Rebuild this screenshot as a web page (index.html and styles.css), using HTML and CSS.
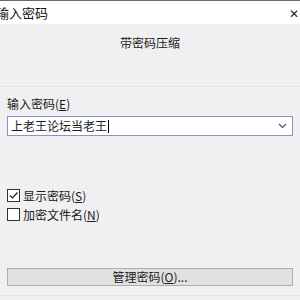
FILE: index.html
```html
<!DOCTYPE html>
<html lang="zh-CN">
<head>
  <meta charset="UTF-8" />
  <title>输入密码</title>
  <link rel="stylesheet" href="styles.css">
</head>
<body>
  <div class="dialog">
    <div class="titlebar">
      <span class="title">输入密码</span>
      <span class="close">&#x2715;</span>
    </div>
    <div class="header">带密码压缩</div>
    <div class="content">
      <div class="field-label">输入密码(<u>E</u>)</div>
      <div class="combo">
        <span class="combo-text">上老王论坛当老王<span class="caret"></span></span>
        <svg class="chevron" width="9" height="6" viewBox="0 0 9 6">
          <path d="M1 1 L4.5 4.5 L8 1" fill="none" stroke="#555" stroke-width="1.2"/>
        </svg>
      </div>
      <div class="checks">
        <label class="check"><span class="box checked">
          <svg width="11" height="11" viewBox="0 0 11 11"><path d="M2 5.5 L4.5 8 L9.5 2.5" fill="none" stroke="#222" stroke-width="1.2"/></svg>
        </span>显示密码(<u>S</u>)</label>
        <label class="check"><span class="box"></span>加密文件名(<u>N</u>)</label>
      </div>
      <div class="btn">管理密码(<u>O</u>)...</div>
    </div>
    <div class="footer-line"></div>
  </div>
</body>
</html>
```

FILE: styles.css
```css
body {
  margin: 0;
  background: #f0f0f0;
  font-family: "Noto Sans CJK SC", "Noto Sans", sans-serif;
  font-size: 12px;
  color: #1a1a1a;
}
.dialog {
  width: 300px;
  height: 300px;
  overflow: hidden;
  background: #f0eff1;
}
.titlebar {
  height: 23px;
  background: #fff;
  border-top: 1px solid #6a6a6a;
  display: flex;
  align-items: center;
  justify-content: space-between;
}
.title {
  font-size: 13px;
  margin-left: -4px;
  color: #111;
}
.close {
  font-size: 12px;
  margin-right: 1px;
  color: #222;
}
.header {
  height: 63px;
  box-sizing: border-box;
  padding-top: 10px;
  text-align: center;
  font-size: 12px;
  border-bottom: 1px solid #e2e1e3;
}
.content {
  padding: 0 7px;
}
.field-label {
  margin-top: 8px;
  height: 18px;
  line-height: 18px;
}
u {
  text-decoration: underline;
}
.combo {
  margin-top: 3px;
  height: 20px;
  box-sizing: border-box;
  border: 1px solid #7f9db9;
  background: #fff;
  display: flex;
  align-items: center;
  justify-content: space-between;
  padding: 0 5px 0 3px;
}
.combo-text {
  font-size: 12px;
  line-height: 18px;
  display: flex;
  align-items: center;
}
.caret {
  display: inline-block;
  width: 1px;
  height: 13px;
  background: #000;
  margin-left: 1px;
}
.checks {
  margin-top: 53px;
  display: flex;
  flex-direction: column;
  gap: 6px;
}
.check {
  display: flex;
  align-items: center;
  height: 13px;
  font-size: 12px;
}
.box {
  width: 11px;
  height: 11px;
  border: 1px solid #333;
  background: #fff;
  margin-right: 3px;
  display: flex;
}
.btn {
  margin-top: 47px;
  height: 18px;
  box-sizing: border-box;
  border: 1px solid #adadad;
  background: #e1e1e1;
  text-align: center;
  line-height: 16px;
  font-size: 12px;
}
.footer-line {
  margin-top: 9px;
  height: 1px;
  background: #e2e1e3;
}
```
